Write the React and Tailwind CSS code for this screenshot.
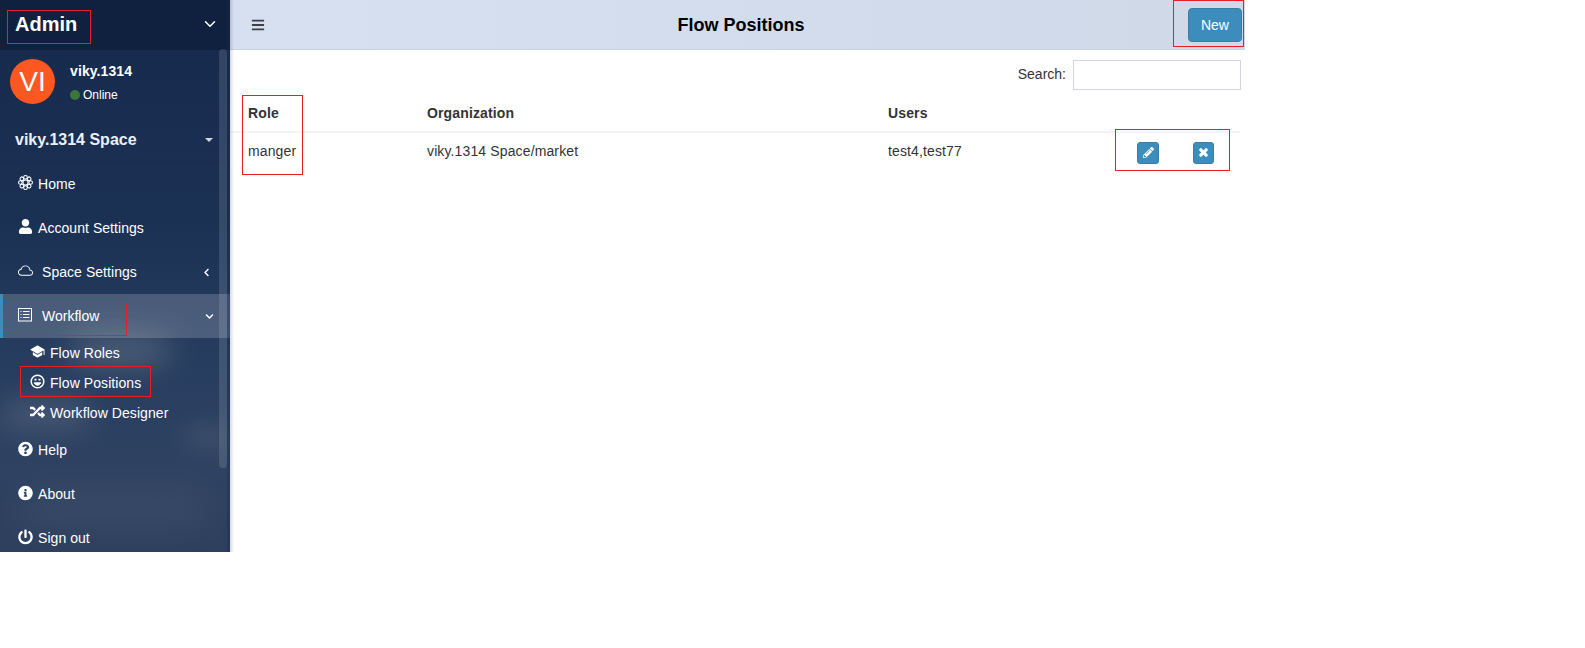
import { FaUser, FaRandom, FaQuestionCircle, FaInfoCircle, FaPowerOff, FaPencilAlt, FaTimes, FaBars, FaChevronDown, FaChevronLeft } from 'react-icons/fa';
import { BsCloud } from 'react-icons/bs';
import { IoSchool } from 'react-icons/io5';
import { LuChevronDown } from 'react-icons/lu';

const redBox = 'absolute border border-[#ec1c24] pointer-events-none';

function FlowerIcon() {
    const petals = [0, 45, 90, 135, 180, 225, 270, 315];
    return (
        <svg width="15" height="15" viewBox="0 0 14 14" fill="none" stroke="currentColor" strokeWidth="1">
            {petals.map((deg) => (
                <circle key={deg} cx="7" cy="2.2" r="1.7" transform={`rotate(${deg} 7 7)`} />
            ))}
            <circle cx="7" cy="7" r="2.4" />
        </svg>
    );
}

function ListIcon() {
    return (
        <svg width="14" height="14" viewBox="0 0 14 14" fill="none" stroke="currentColor" strokeWidth="1">
            <rect x="0.5" y="0.5" width="13" height="12.5" />
            <path d="M2.5 3.5h1M5 3.5h6.5M2.5 6.5h1M5 6.5h6.5M2.5 9.5h1M5 9.5h6.5" />
        </svg>
    );
}

function SmileIcon() {
    return (
        <svg width="15" height="15" viewBox="0 0 15 15" fill="none" stroke="currentColor">
            <circle cx="7.5" cy="7.5" r="6.3" strokeWidth="1.5" />
            <path d="M4.5 5.6h2M8.5 5.6h2" strokeWidth="1.6" />
            <path d="M4.2 8.8h6.6c-.6 1.6-1.8 2.4-3.3 2.4s-2.7-.8-3.3-2.4z" strokeWidth="1" fill="currentColor" />
        </svg>
    );
}

function MenuItem({ icon, label, gap = 'ml-[5px]', children }) {
    return (
        <div className="flex items-center h-[44px] pl-[18px] pr-[20px] text-[14px] tracking-[0.05px] text-white">
            <span className="w-[15px] flex justify-center text-[15px] -mt-[3px]">{icon}</span>
            <span className={gap}>{label}</span>
            {children}
        </div>
    );
}

function SubItem({ icon, label }) {
    return (
        <div className="flex items-center h-[30px] pl-[30px] text-[14px] tracking-[0.07px] text-white">
            <span className="w-[15px] flex justify-center text-[15px] -mt-[3px]">{icon}</span>
            <span className="ml-[5px]">{label}</span>
        </div>
    );
}

function Sidebar() {
    return (
        <aside className="relative w-[230px] h-[552px] shrink-0 overflow-hidden bg-[linear-gradient(180deg,#16294d_0%,#1b3154_40%,#253c5f_62%,#2f4262_85%,#2d3f5c_100%)]">
            {/* cloudy background */}
            <div className="absolute left-[70px] top-[335px] w-[100px] h-[30px] rounded-full bg-[#7c8794] opacity-50 blur-[16px]" />
            <div className="absolute left-[0px] top-[400px] w-[90px] h-[30px] rounded-full bg-[#6b7a8d] opacity-40 blur-[14px]" />
            <div className="absolute left-[185px] top-[428px] w-[45px] h-[18px] rounded-full bg-[#77828f] opacity-30 blur-[12px]" />
            <div className="absolute left-[20px] top-[490px] w-[190px] h-[40px] rounded-full bg-[#505f76] opacity-30 blur-[18px]" />

            <div className="relative">
                <div className="flex items-center justify-between h-[50px] bg-[#10213f] pl-[15px] pr-[11px] pb-[3px]">
                    <span className="text-[20px] font-bold text-white">Admin</span>
                    <LuChevronDown className="text-white text-[18px]" />
                </div>
                <div className="flex h-[68px] pl-[10px] pt-[9px]">
                    <div className="flex items-center justify-center w-[45px] h-[45px] rounded-full bg-[#ff5722] text-white text-[28px]">VI</div>
                    <div className="ml-[15px] pt-[2px]">
                        <div className="text-[14px] font-bold tracking-[0.1px] text-white leading-[20px]">viky.1314</div>
                        <div className="flex items-center mt-[6px] text-[12px] text-white leading-[16px]">
                            <span className="w-[10px] h-[10px] rounded-full bg-[#3c763d] mr-[3px]" />
                            Online
                        </div>
                    </div>
                </div>
                <div className="flex items-center justify-between h-[44px] pl-[15px] pr-[17px] border-b border-[#1a2c4d] text-[16px] font-bold text-[#eceff3]">
                    <span>viky.1314 Space</span>
                    <span className="w-0 h-0 border-x-[4px] border-x-transparent border-t-[4px] border-t-[#d5d9df]" />
                </div>
                <MenuItem icon={<FlowerIcon />} label="Home" />
                <MenuItem icon={<FaUser />} label="Account Settings" />
                <MenuItem icon={<BsCloud className="text-[16px]" />} label="Space Settings" gap="ml-[9px]">
                    <FaChevronLeft className="ml-auto text-[9px] mr-[-1px]" />
                </MenuItem>
                <div className="flex items-center h-[44px] pl-[15px] pr-[16px] border-l-[3px] border-[#3c8dbc] bg-[#ffffff2e] text-[14px] text-white">
                    <span className="-mt-[3px]"><ListIcon /></span>
                    <span className="ml-[10px]">Workflow</span>
                    <FaChevronDown className="ml-auto text-[9px]" />
                </div>
                <div>
                    <SubItem icon={<IoSchool />} label="Flow Roles" />
                    <SubItem icon={<SmileIcon />} label="Flow Positions" />
                    <SubItem icon={<FaRandom />} label="Workflow Designer" />
                </div>
                <MenuItem icon={<FaQuestionCircle className="text-[16px]" />} label="Help" />
                <MenuItem icon={<FaInfoCircle className="text-[16px]" />} label="About" />
                <MenuItem icon={<FaPowerOff className="text-[16px]" />} label="Sign out" />
            </div>

            {/* scrollbar */}
            <div className="absolute left-[219px] top-[49px] w-[8px] h-[419px] rounded-[4px] bg-[#ffffff1f]" />
            <div className="absolute right-0 top-0 w-[3px] h-full bg-[#1a2c4d] opacity-30" />

            <div className={`${redBox} left-[7px] top-[10px] w-[84px] h-[34px]`} />
            <div className={`${redBox} left-[9px] top-[303px] w-[118px] h-[33px]`} />
            <div className={`${redBox} left-[20px] top-[366px] w-[131px] h-[31px]`} />
        </aside>
    );
}

function Content() {
    return (
        <main className="relative w-[1015px] shrink-0">
            <div className="absolute left-0 top-0 w-[4px] h-[552px] bg-[linear-gradient(90deg,#00000026,#00000000)]" />
            <header className="flex items-center justify-between h-[50px] pl-[21px] pr-[3px] bg-[linear-gradient(90deg,#d6e0f0,#d0d9e8)] border-b border-[#c9d3e2]">
                <FaBars className="text-[14px] text-[#3c3f44] mt-[1px]" />
                <h1 className="text-[18px] font-bold text-black ml-[29px] mt-[1px]">Flow Positions</h1>
                <button className="w-[54px] h-[34px] rounded-[4px] bg-[#3c8dbc] border border-[#367fa9] text-white text-[14px] pt-[1px]">New</button>
            </header>

            <div className="flex justify-end items-center h-[30px] mt-[10px] pr-[4px] text-[14px] text-[#333]">
                <label className="-mt-[2px]">Search:</label>
                <input className="ml-[7px] w-[168px] h-[30px] border border-[#d2d6de] outline-none" />
            </div>

            <table className="w-[1010px] mt-[3px] text-[14px] tracking-[0.13px] text-[#333] border-collapse">
                <thead>
                    <tr className="border-b-2 border-[#f4f4f4]">
                        <th className="w-[186px] h-[39px] pl-[18px] pt-[2px] text-left font-bold">Role</th>
                        <th className="w-[472px] pl-[11px] pt-[2px] text-left font-bold">Organization</th>
                        <th className="w-[224px] pt-[2px] text-left font-bold">Users</th>
                        <th />
                    </tr>
                </thead>
                <tbody>
                    <tr>
                        <td className="h-[38px] pl-[18px]">manger</td>
                        <td className="pl-[11px]">viky.1314 Space/market</td>
                        <td>test4,test77</td>
                        <td>
                            <div className="flex items-center pt-[2px] pl-[25px]">
                                <button className="flex items-center justify-center w-[22px] h-[22px] rounded-[3px] bg-[#3c8dbc] border border-[#367fa9] text-white text-[11px]"><FaPencilAlt /></button>
                                <button className="flex items-center justify-center ml-[34px] w-[21px] h-[22px] rounded-[3px] bg-[#3c8dbc] border border-[#367fa9] text-white text-[11px]"><FaTimes stroke="currentColor" strokeWidth="50" /></button>
                            </div>
                        </td>
                    </tr>
                </tbody>
            </table>

            <div className={`${redBox} left-[943px] top-0 w-[71px] h-[47px]`} />
            <div className={`${redBox} left-[12px] top-[95px] w-[61px] h-[80px]`} />
            <div className={`${redBox} left-[885px] top-[129px] w-[115px] h-[42px]`} />
        </main>
    );
}

export default function App() {
    return (
        <div className="flex items-start min-h-[648px] bg-white font-['Liberation_Sans',Arial,sans-serif]">
            <Sidebar />
            <Content />
        </div>
    );
}
